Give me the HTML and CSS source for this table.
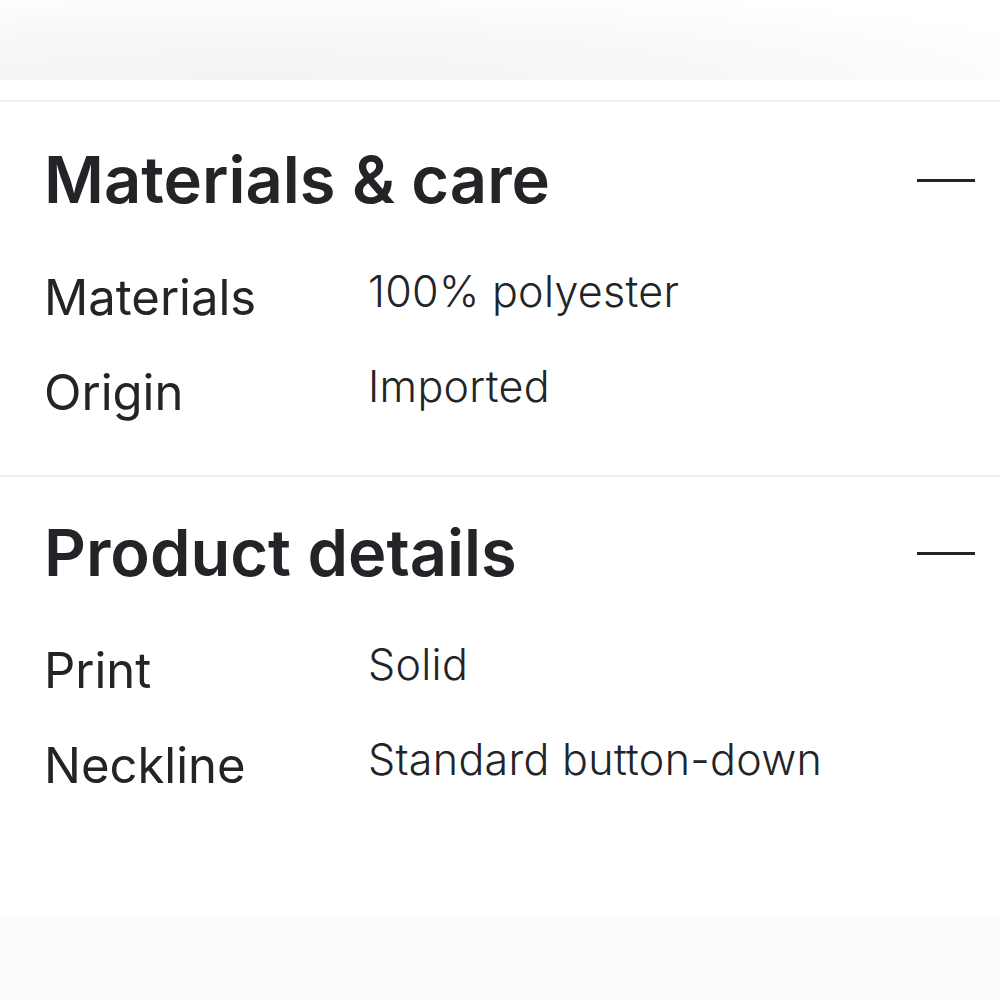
FILE: index.html
```html
<!DOCTYPE html>
<html lang="en">
<head>
  <meta charset="UTF-8">
  <meta name="viewport" content="width=device-width, initial-scale=1.0">
  <title>Materials &amp; care</title>
  <link rel="stylesheet" href="styles.css">
</head>
<body>
  <div class="top-band"></div>

  <section class="panel">
    <div class="panel-head">
      <h2>Materials &amp; care</h2>
      <span class="collapse"></span>
    </div>
    <dl class="specs">
      <dt>Materials</dt>
      <dd>100% polyester</dd>
      <dt>Origin</dt>
      <dd>Imported</dd>
    </dl>
  </section>

  <section class="panel">
    <div class="panel-head">
      <h2>Product details</h2>
      <span class="collapse"></span>
    </div>
    <dl class="specs">
      <dt>Print</dt>
      <dd>Solid</dd>
      <dt>Neckline</dt>
      <dd>Standard button-down</dd>
    </dl>
  </section>

  <div class="bottom-band"></div>
</body>
</html>
```

FILE: styles.css
```css
body {
  margin: 0;
  height: 1000px;
  overflow: hidden;
  font-family: Inter, "Noto Sans", sans-serif;
  background-color: #ffffff;
  color: #222427;
  display: flex;
  flex-direction: column;
}
.top-band {
  height: 80px;
  margin-bottom: 20px;
  background: radial-gradient(ellipse at 25% 100%, #f3f3f3 0%, #f8f8f8 45%, #ffffff 85%);
}
.panel {
  border-top: 2px solid #efefef;
  padding: 38px 25px 35px 44px;
}
.panel + .panel {
  padding-top: 36px;
}
.panel-head {
  display: flex;
  align-items: center;
  justify-content: space-between;
}
.panel-head h2 {
  margin: 0;
  font-size: 65px;
  font-weight: 600;
  line-height: 80px;
}
.collapse {
  width: 58px;
  height: 3px;
  background-color: #222427;
}
.specs {
  display: grid;
  grid-template-columns: 324px 1fr;
  margin: 30px 0 0;
  font-size: 49px;
  line-height: 95px;
}
.specs dt {
  font-weight: 400;
}
.specs dd {
  margin: 0;
  font-size: 43px;
  font-weight: 300;
  letter-spacing: 0.3px;
  line-height: 83px;
}
.bottom-band {
  margin-top: auto;
  height: 82px;
  background-color: #fcfcfc;
}
```
